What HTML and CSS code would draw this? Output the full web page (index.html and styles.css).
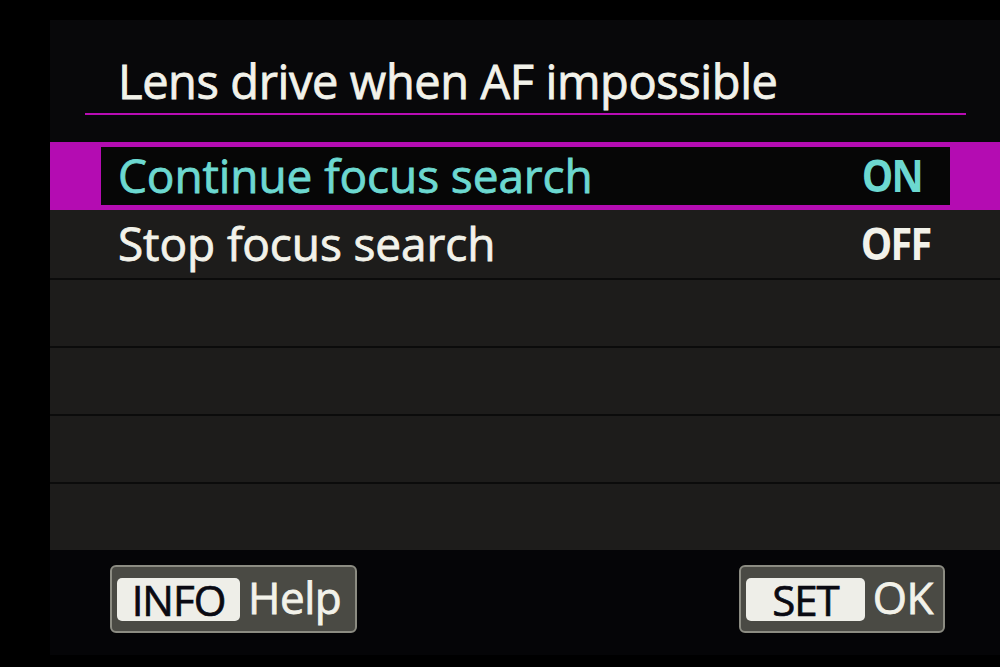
FILE: index.html
```html
<!DOCTYPE html>
<html lang="en">
<head>
<meta charset="utf-8">
<title>Lens drive when AF impossible</title>
<link rel="stylesheet" href="styles.css">
</head>
<body>
<div class="screen">
  <div class="header">
    <h1 class="title">Lens drive when AF impossible</h1>
    <div class="rule"></div>
  </div>
  <ul class="menu">
    <li class="item selected">
      <div class="item-inner">
        <span class="label">Continue focus search</span>
        <span class="value">ON</span>
      </div>
    </li>
    <li class="item">
      <span class="label">Stop focus search</span>
      <span class="value">OFF</span>
    </li>
    <li class="item empty"></li>
    <li class="item empty"></li>
    <li class="item empty"></li>
    <li class="item empty"></li>
  </ul>
  <div class="footer">
    <div class="btn btn-info"><span class="key">INFO</span><span class="action">Help</span></div>
    <div class="btn btn-set"><span class="key key-set">SET</span><span class="action">OK</span></div>
  </div>
</div>
</body>
</html>
```
FILE: styles.css
```css
html, body {
  margin: 0;
  padding: 0;
  background: #000;
  width: 1000px;
  height: 667px;
  overflow: hidden;
  font-family: "Open Sans", "Noto Sans", sans-serif;
}

.screen {
  margin: 20px 0 0 50px;
  width: 950px;
  height: 635px;
  background: #08080a;
  display: flex;
  flex-direction: column;
}

.header {
  height: 122px;
  display: flex;
  flex-direction: column;
}

.title {
  margin: 0;
  padding: 31px 0 0 68px;
  font-size: 47px;
  font-weight: 400;
  line-height: 60px;
  color: #f2f2ea;
  letter-spacing: -0.4px;
  -webkit-text-stroke: 0.8px #f2f2ea;
}

.rule {
  margin: 2px 0 0 35px;
  width: 881px;
  height: 2px;
  background: #b80cb4;
}

.menu {
  list-style: none;
  margin: 0;
  padding: 0;
}

.item {
  height: 68px;
  box-sizing: border-box;
  background: #1d1c1b;
  display: flex;
  align-items: center;
  justify-content: space-between;
  padding: 0 70px 0 68px;
  color: #f2f2ea;
  font-size: 46px;
  font-weight: 400;
}

.item.empty {
  border-top: 2px solid #0b0b0b;
}

.item.selected {
  background: #b40cb2;
  padding: 5px 50px 5px 51px;
  align-items: stretch;
}

.item-inner {
  flex: 1;
  background: #060606;
  display: flex;
  align-items: center;
  justify-content: space-between;
  padding: 0 28px 0 17px;
  color: #6cd8d0;
}

.label {
  letter-spacing: -0.1px;
  line-height: 1;
  padding-bottom: 2px;
  -webkit-text-stroke: 0.8px currentColor;
}

.value {
  font-weight: 700;
  font-size: 44px;
  line-height: 1;
  letter-spacing: -2px;
  padding-bottom: 2px;
  transform: scaleX(0.9);
  transform-origin: right center;
}

.footer {
  flex: 1;
  display: flex;
  justify-content: space-between;
  align-items: flex-start;
  padding: 15px 55px 0 60px;
  background: #050507;
}

.btn {
  height: 68px;
  box-sizing: border-box;
  border: 2px solid #8c8c82;
  border-radius: 6px;
  background: #4a4a44;
  display: flex;
  align-items: center;
  padding: 0 10px 0 5px;
}

.btn-info {
  width: 247px;
}

.btn-set {
  width: 206px;
}

.key {
  height: 43px;
  width: 123px;
  box-sizing: border-box;
  background: #eeeee8;
  border-radius: 5px;
  color: #0a0a12;
  font-size: 42px;
  line-height: 43px;
  text-align: center;
  letter-spacing: -1px;
  -webkit-text-stroke: 0.7px #0a0a12;
}

.key-set {
  width: 122px;
}

.action {
  color: #f2f2ea;
  font-size: 44px;
  line-height: 1;
  margin-left: 8px;
  padding-bottom: 4px;
  letter-spacing: -0.5px;
  -webkit-text-stroke: 0.8px #f2f2ea;
}
```
